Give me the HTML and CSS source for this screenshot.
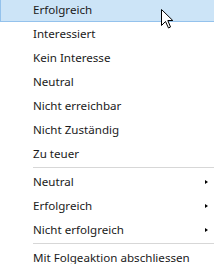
FILE: index.html
```html
<!DOCTYPE html>
<html lang="de">
<head>
<meta charset="utf-8">
<link rel="stylesheet" href="styles.css">
</head>
<body>
<div class="menu">
  <div class="item hover">Erfolgreich</div>
  <div class="item">Interessiert</div>
  <div class="item">Kein Interesse</div>
  <div class="item">Neutral</div>
  <div class="item">Nicht erreichbar</div>
  <div class="item">Nicht Zuständig</div>
  <div class="item">Zu teuer</div>
  <div class="sep"></div>
  <div class="item sub"><span>Neutral</span><i class="arrow"></i></div>
  <div class="item sub"><span>Erfolgreich</span><i class="arrow"></i></div>
  <div class="item sub"><span>Nicht erfolgreich</span><i class="arrow"></i></div>
  <div class="sep"></div>
  <div class="item">Mit Folgeaktion abschliessen</div>
</div>
<svg class="cursor" width="13" height="20" viewBox="0 0 13 20">
  <path d="M0.5 0.5 L0.5 16.5 L4.5 12.5 L7.5 19 L9.5 18 L6.8 11.5 L11.8 11.5 Z" fill="#fff" stroke="#000" stroke-width="1" stroke-linejoin="miter"/>
</svg>
</body>
</html>
```
FILE: styles.css
```css
html, body {
  margin: 0;
  padding: 0;
  background: #ffffff;
  overflow: hidden;
}
body {
  width: 214px;
  height: 264px;
  position: relative;
}
.menu {
  width: 214px;
  margin-top: -1px;
  display: flex;
  flex-direction: column;
  font-family: "Noto Sans", "Open Sans", sans-serif;
  font-size: 11.6px;
  color: #1b1b1b;
}
.item {
  box-sizing: border-box;
  height: 23px;
  line-height: 20px;
  padding: 0 0 1px 32px;
  margin-bottom: 1px;
  border: 1px solid transparent;
  border-right-width: 0;
  display: flex;
  align-items: center;
  white-space: nowrap;
}
.item.hover {
  background: #cce4f7;
  border-color: #94c2ec;
}
.item.sub {
  justify-content: space-between;
  padding-right: 6px;
}
.arrow {
  width: 0;
  height: 0;
  border-left: 3px solid #000;
  border-top: 2.5px solid transparent;
  border-bottom: 2.5px solid transparent;
}
.sep {
  height: 4px;
  margin-left: 33px;
  box-sizing: border-box;
  border-top: 1px solid #d7d7d7;
}
.cursor {
  position: absolute;
  left: 161px;
  top: 9px;
}
```
